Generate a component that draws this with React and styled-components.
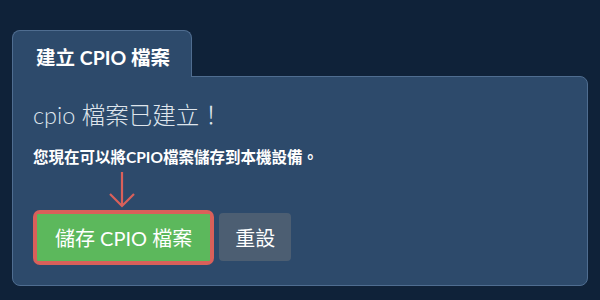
import React from "react";
import styled, { createGlobalStyle } from "styled-components";

const GlobalStyle = createGlobalStyle`
  html, body {
    margin: 0;
    padding: 0;
    background: #0f2239;
  }
  body {
    font-family: "Lato", "Noto Sans CJK TC", sans-serif;
    color: #ffffff;
  }
`;

const Page = styled.div`
  width: 600px;
  height: 300px;
  box-sizing: border-box;
  padding: 30px 12px 0 12px;
`;

const Tab = styled.div`
  position: relative;
  z-index: 1;
  width: 180px;
  height: 47px;
  box-sizing: border-box;
  margin-bottom: -1px;
  padding-left: 23px;
  display: flex;
  align-items: center;
  padding-top: 4px;
  background: #2d4a6b;
  border: 1px solid #4f6d90;
  border-bottom: none;
  border-radius: 8px 8px 0 0;
  font-size: 19.5px;
  font-weight: 700;
  color: #ffffff;
  white-space: nowrap;
`;

const Panel = styled.div`
  width: 576px;
  height: 210px;
  box-sizing: border-box;
  padding: 24px 20px;
  background: #2d4a6b;
  border: 1px solid #4f6d90;
  border-radius: 0 8px 8px 8px;
`;

const Heading = styled.h2`
  margin: 0;
  font-size: 23.5px;
  line-height: 28px;
  font-weight: 300;
  color: #dfe5ec;
`;

const Message = styled.p`
  margin: 18px 0 0 0;
  font-size: 15.5px;
  line-height: 20px;
  font-weight: 700;
  color: #ffffff;
`;

const Actions = styled.div`
  display: flex;
  align-items: center;
  gap: 9px;
  margin-top: 46px;
`;

const Highlight = styled.div`
  position: relative;
  margin-left: 4px;
  border-radius: 3px;
  box-shadow: 0 0 0 4px #d9605a;
`;

const Button = styled.button`
  height: ${(p) => (p.$primary ? "47px" : "48px")};
  padding: 0 ${(p) => (p.$primary ? "18px" : "16px")};
  border: none;
  border-radius: ${(p) => (p.$primary ? "1px" : "4px")};
  background: ${(p) => (p.$primary ? "#5cb85c" : "#4c5e72")};
  color: #ffffff;
  font-family: "Lato", "Noto Sans CJK TC", sans-serif;
  font-size: 20px;
  font-weight: 400;
  cursor: pointer;
`;

const Arrow = styled.svg`
  position: absolute;
  left: 71px;
  top: -43px;
`;

function DownArrow() {
  return (
    <Arrow width="28" height="38" viewBox="0 0 28 38">
      <path
        d="M14 1 V35 M2 23 L14 35 L26 23"
        fill="none"
        stroke="#d9605a"
        strokeWidth="2.2"
      />
    </Arrow>
  );
}

export default function App() {
  return (
    <Page>
      <GlobalStyle />
      <Tab>建立 CPIO 檔案</Tab>
      <Panel>
        <Heading>cpio 檔案已建立！</Heading>
        <Message>您現在可以將CPIO檔案儲存到本機設備。</Message>
        <Actions>
          <Highlight>
            <DownArrow />
            <Button $primary>儲存 CPIO 檔案</Button>
          </Highlight>
          <Button>重設</Button>
        </Actions>
      </Panel>
    </Page>
  );
}
